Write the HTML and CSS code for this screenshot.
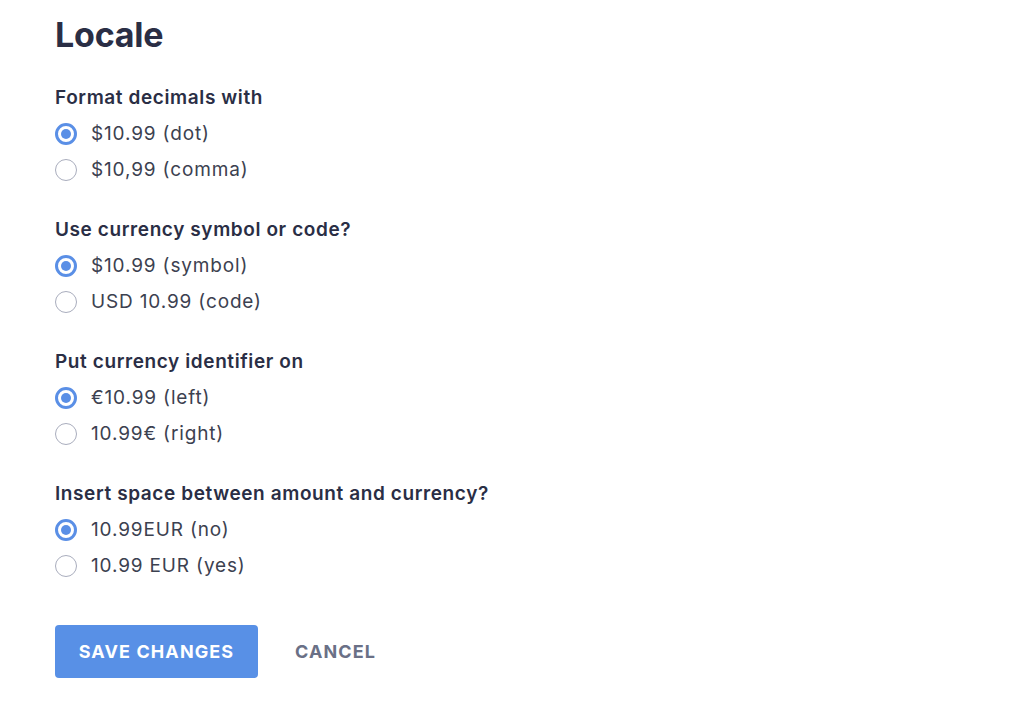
FILE: index.html
```html
<!DOCTYPE html>
<html>
<head>
<meta charset="utf-8">
<link rel="stylesheet" href="styles.css">
</head>
<body>
<div class="page">
  <h1 class="title">Locale</h1>
  <div class="group">
    <div class="label">Format decimals with</div>
    <label class="option"><span class="radio checked"></span>$10.99 (dot)</label>
    <label class="option"><span class="radio"></span>$10,99 (comma)</label>
  </div>
  <div class="group">
    <div class="label">Use currency symbol or code?</div>
    <label class="option"><span class="radio checked"></span>$10.99 (symbol)</label>
    <label class="option"><span class="radio"></span>USD 10.99 (code)</label>
  </div>
  <div class="group">
    <div class="label">Put currency identifier on</div>
    <label class="option"><span class="radio checked"></span>€10.99 (left)</label>
    <label class="option"><span class="radio"></span>10.99€ (right)</label>
  </div>
  <div class="group">
    <div class="label">Insert space between amount and currency?</div>
    <label class="option"><span class="radio checked"></span>10.99EUR (no)</label>
    <label class="option"><span class="radio"></span>10.99 EUR (yes)</label>
  </div>
  <div class="actions">
    <button class="btn-primary">SAVE CHANGES</button>
    <button class="btn-link">CANCEL</button>
  </div>
</div>
</body>
</html>
```
FILE: styles.css
```css
html, body {
  margin: 0;
  padding: 0;
  background: #ffffff;
}
body {
  font-family: Inter, "Noto Sans", sans-serif;
  color: #3c4150;
}
.page {
  padding: 13px 0 0 55px;
}
.title {
  margin: 0;
  font-size: 34px;
  font-weight: 700;
  color: #2a2e45;
  line-height: 44px;
  letter-spacing: -0.2px;
}
.group {
  display: flex;
  flex-direction: column;
  margin-top: 23px;
}
.group + .group {
  margin-top: 24px;
}
.label {
  font-size: 19px;
  font-weight: 600;
  color: #2a2e45;
  line-height: 36px;
  letter-spacing: 0.6px;
}
.option {
  display: flex;
  align-items: center;
  gap: 14px;
  font-size: 19px;
  line-height: 36px;
  color: #3c4150;
  letter-spacing: 0.85px;
}
.radio {
  width: 22px;
  height: 22px;
  box-sizing: border-box;
  border-radius: 50%;
  border: 1px solid #a9adbd;
  background: #fff;
  position: relative;
  flex: none;
}
.radio.checked {
  border: 3px solid #5a8fe6;
}
.radio.checked::after {
  content: "";
  position: absolute;
  left: 3px;
  top: 3px;
  width: 10px;
  height: 10px;
  border-radius: 50%;
  background: #5a8fe6;
}
.actions {
  display: flex;
  align-items: center;
  gap: 17px;
  margin-top: 41px;
}
.btn-primary {
  font-family: inherit;
  background: #5890e6;
  color: #fff;
  border: none;
  border-radius: 4px;
  height: 53px;
  width: 203px;
  font-size: 18px;
  font-weight: 700;
  letter-spacing: 1.1px;
  padding: 0;
}
.btn-link {
  font-family: inherit;
  background: none;
  border: none;
  color: #6a7086;
  font-size: 18px;
  font-weight: 700;
  letter-spacing: 1.1px;
  padding: 0 20px;
  height: 53px;
}
```
